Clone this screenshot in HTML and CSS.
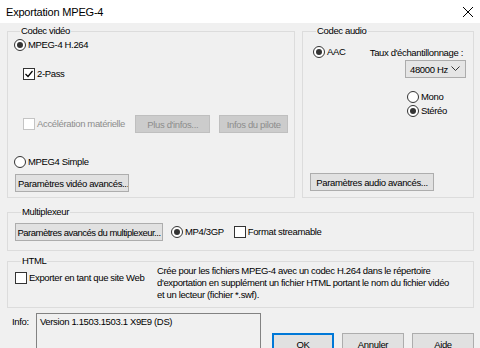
FILE: index.html
```html
<!DOCTYPE html>
<html lang="fr">
<head>
  <meta charset="UTF-8" />
  <title>Exportation MPEG-4</title>
  <link rel="stylesheet" href="styles.css">
</head>
<body>

<div class="titlebar">
  <span class="title">Exportation MPEG-4</span>
  <svg class="close" width="12" height="12" viewBox="0 0 12 12">
    <path d="M1 1 L11 11 M11 1 L1 11" stroke="#000" stroke-width="1" fill="none"/>
  </svg>
</div>

<div class="dialog">
  <div class="codecs">
    <fieldset class="group video">
      <legend>Codec vidéo</legend>
      <label class="opt"><span class="radio on"></span>MPEG-4 H.264</label>
      <label class="opt pass"><span class="check on"><svg width="10" height="10" viewBox="0 0 10 10"><path d="M1.5 5 L4 7.5 L8.5 2" stroke="#000" stroke-width="1.2" fill="none"/></svg></span>2-Pass</label>
      <div class="accel">
        <label class="opt disabled"><span class="check"></span>Accélération matérielle</label>
        <button class="btn more" disabled>Plus d'infos...</button>
        <button class="btn driver" disabled>Infos du pilote</button>
      </div>
      <label class="opt simple"><span class="radio"></span>MPEG4 Simple</label>
      <button class="btn video-adv">Paramètres vidéo avancés...</button>
    </fieldset>

    <fieldset class="group audio">
      <legend>Codec audio</legend>
      <div class="audio-top">
        <label class="opt aac"><span class="radio on"></span>AAC</label>
        <span class="rate-label">Taux d'échantillonnage :</span>
      </div>
      <div class="select">
        <span>48000 Hz</span>
        <svg width="9" height="6" viewBox="0 0 9 6"><path d="M0.5 0.5 L4.5 4.5 L8.5 0.5" stroke="#333" stroke-width="1" fill="none"/></svg>
      </div>
      <label class="opt mono"><span class="radio"></span>Mono</label>
      <label class="opt stereo"><span class="radio on"></span>Stéréo</label>
      <button class="btn audio-adv">Paramètres audio avancés...</button>
    </fieldset>
  </div>

  <fieldset class="group mux">
    <legend>Multiplexeur</legend>
    <div class="mux-row">
      <button class="btn mux-adv">Paramètres avancés du multiplexeur...</button>
      <label class="opt mp4"><span class="radio on"></span>MP4/3GP</label>
      <label class="opt stream"><span class="check"></span>Format streamable</label>
    </div>
  </fieldset>

  <fieldset class="group html">
    <legend>HTML</legend>
    <div class="html-row">
      <label class="opt web"><span class="check"></span>Exporter en tant que site Web</label>
      <p class="desc">Crée pour les fichiers MPEG-4 avec un codec H.264 dans le répertoire<br>d'exportation en supplément un fichier HTML portant le nom du fichier vidéo<br>et un lecteur (fichier *.swf).</p>
    </div>
  </fieldset>

  <div class="bottom">
    <span class="info-label">Info:</span>
    <div class="info-box">Version 1.1503.1503.1 X9E9 (DS)</div>
    <div class="actions">
      <button class="btn action default">OK</button>
      <button class="btn action">Annuler</button>
      <button class="btn action">Aide</button>
    </div>
  </div>
</div>

</body>
</html>
```

FILE: styles.css
```css
body {
  margin: 0;
  width: 480px;
  height: 348px;
  overflow: hidden;
  background: #f0f0f0;
  font-family: 'Liberation Sans', Arial, sans-serif;
  font-size: 9.5px;
  letter-spacing: -0.35px;
  color: #000;
}

.titlebar {
  height: 23px;
  background: #fff;
  display: flex;
  align-items: center;
  justify-content: space-between;
  padding: 0 6px;
}

.title {
  font-size: 11px;
  letter-spacing: -0.2px;
}

.dialog {
  padding: 2px 6px 0 7px;
}

/* group boxes */
.group {
  margin: 0;
  padding: 0;
  border: 1px solid #dcdcdc;
  min-width: 0;
}

.group legend {
  padding: 0 1px;
  margin-left: 6px;
  line-height: 12px;
}

.codecs {
  display: flex;
  gap: 7px;
}

.video {
  width: 288px;
  box-sizing: border-box;
  padding: 2px 6px 5px 6px;
}

.audio {
  flex: 1;
  padding: 0 7px 5px 7px;
}

/* radios and checkboxes */
.opt {
  display: flex;
  align-items: center;
  height: 12px;
  line-height: 12px;
  white-space: nowrap;
}

.radio,
.check {
  box-sizing: border-box;
  width: 12px;
  height: 12px;
  margin-right: 2px;
  background: #fff;
  border: 1px solid #333;
  flex-shrink: 0;
  display: flex;
  align-items: center;
  justify-content: center;
}

.radio {
  border-radius: 50%;
}

.radio.on::after {
  content: "";
  width: 6px;
  height: 6px;
  border-radius: 50%;
  background: #333;
}

.check svg {
  display: block;
}

.opt.disabled {
  color: #8d8d8d;
}

.opt.disabled .check {
  border-color: #c4c4c4;
}

/* buttons */
.btn {
  font: inherit;
  letter-spacing: inherit;
  height: 18px;
  padding: 0 2px;
  background: #e1e1e1;
  border: 1px solid #adadad;
  color: #000;
  white-space: nowrap;
  overflow: hidden;
}

.btn:disabled {
  background: #cccccc;
  border-color: #bfbfbf;
  color: #8d8d8d;
}

/* video group */
.pass {
  margin: 17px 0 0 9px;
}

.accel {
  display: flex;
  align-items: center;
  margin-top: 35px;
  margin-left: 9px;
}

.accel .more {
  width: 77px;
  margin-left: 10px;
}

.accel .driver {
  width: 70px;
  margin-left: 9px;
}

.simple {
  margin-top: 23px;
}

.video-adv {
  display: block;
  width: 114px;
  margin: 6px 0 0 1px;
}

/* audio group */
.audio-top {
  display: flex;
  justify-content: space-between;
  align-items: center;
  margin-top: 9px;
  padding-right: 3px;
}

.aac {
  margin-left: 3px;
}

.select {
  box-sizing: border-box;
  width: 61px;
  height: 18px;
  margin: 2px 0 0 auto;
  background: #e5e5e5;
  border: 1px solid #acacac;
  display: flex;
  align-items: center;
  justify-content: space-between;
  padding: 0 5px 0 4px;
  white-space: nowrap;
}

.mono {
  margin: 13px 0 0 97px;
}

.stereo {
  margin: 2px 0 0 97px;
}

.audio-adv {
  display: block;
  width: 124px;
  margin-top: 56px;
}

/* multiplexeur */
.mux {
  margin-top: 8px;
  padding: 5px 7px 9px 7px;
}

.mux-row {
  display: flex;
  align-items: center;
}

.mux-adv {
  width: 148px;
  padding: 0;
  letter-spacing: -0.5px;
}

.mp4 {
  margin-left: 8px;
}

.stream {
  margin-left: 10px;
}

/* html */
.html {
  margin-top: 5px;
  padding: 0 7px 6px 7px;
}

.html legend {
  line-height: 10px;
}

.html-row {
  display: flex;
  align-items: flex-start;
}

.web {
  width: 142px;
  flex-shrink: 0;
  margin-top: 6px;
}

.desc {
  flex: 1;
  margin: -1px 0 0 0;
  line-height: 12px;
}

/* bottom */
.bottom {
  display: flex;
  align-items: flex-start;
  margin-top: 5px;
  padding-left: 5px;
}

.info-label {
  width: 24px;
  margin-top: 3px;
}

.info-box {
  box-sizing: border-box;
  width: 226px;
  height: 50px;
  background: #f0f0f0;
  border: 1px solid #828282;
  padding: 2px 3px;
}

.actions {
  display: flex;
  gap: 8px;
  margin: 20px 0 0 11px;
}

.action {
  width: 62px;
  height: 22px;
}

.action.default {
  border: 1px solid #0078d7;
  box-shadow: inset 0 0 0 1px #0078d7;
}
```
